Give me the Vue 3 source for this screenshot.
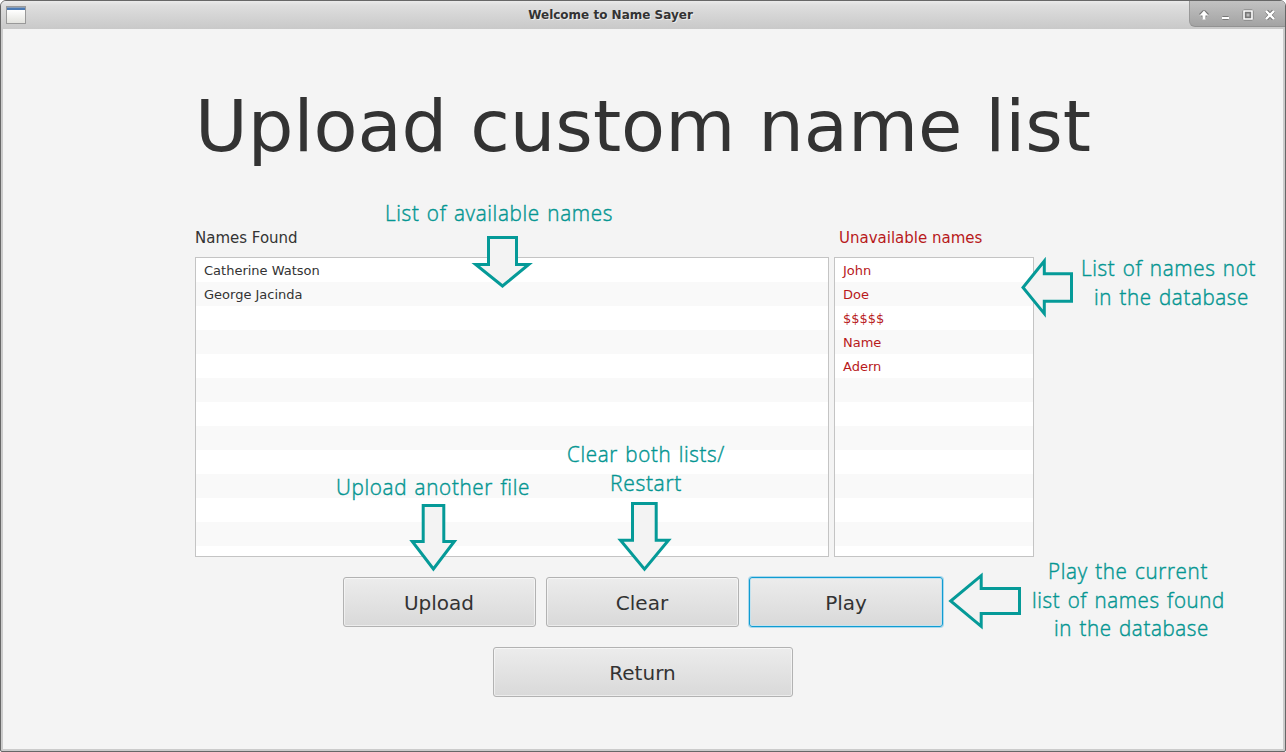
<script setup>
const found = ['Catherine Watson', 'George Jacinda']
const unavailable = ['John', 'Doe', '$$$$$', 'Name', 'Adern']

const arrows = [
  '488.5,237.5 516.5,237.5 516.5,264.5 528.7,264.5 502.5,286 475.7,264.5 488.5,264.5',
  '1071.5,273.8 1071.5,301.2 1044.3,301.2 1044.3,313.6 1023,287.5 1044.3,261 1044.3,273.8',
  '423.2,505.5 443.8,505.5 443.8,541.5 454.3,541.5 433.4,569 412.3,541.5 423.2,541.5',
  '632.5,503.5 656.2,503.5 656.2,540.2 668.5,540.2 644.5,569.2 620.5,540.2 632.5,540.2',
  '1019.5,588.5 1019.5,613.5 981.2,613.5 981.2,626.3 950.7,601 981.2,575.6 981.2,588.5',
]

const notes = [
  { t: 'List of available names', x: 385, y: 221, w: 228 },
  { t: 'List of names not', x: 1081, y: 276, w: 175 },
  { t: 'in the database', x: 1094, y: 305, w: 155 },
  { t: 'Upload another file', x: 336, y: 495, w: 194 },
  { t: 'Clear both lists/', x: 567, y: 462, w: 158 },
  { t: 'Restart', x: 610, y: 491, w: 72 },
  { t: 'Play the current', x: 1048, y: 579, w: 160 },
  { t: 'list of names found', x: 1032, y: 608, w: 193 },
  { t: 'in the database', x: 1054, y: 636, w: 155 },
]
</script>

<template>
  <div class="window">
    <header class="titlebar">
      <span class="app-icon"></span>
      <span class="caption">Welcome to Name Sayer</span>
      <div class="controls">
        <svg width="96" height="26" viewBox="0 0 96 26">
          <g fill="none" stroke="#777" stroke-width="4" stroke-linejoin="round">
            <path d="M15 18v-6M11.500 14.500l3.500-3.500 3.500 3.500" />
            <path d="M33.500 17h6" />
            <path d="M55.500 10.500h7v7h-7z" />
            <path d="M77.500 10l7 8M84.500 10l-7 8" />
          </g>
          <path d="M15 9.500l4.500 5H16.500v4h-3v-4h-3z" fill="#fff" />
          <path d="M33 16h7v2h-7z" fill="#fff" />
          <path d="M55 10h8v8h-8z" fill="none" stroke="#fff" stroke-width="1.600" />
          <path d="M57 12h4v4h-4z" fill="#bbb" stroke="#777" />
          <path d="M77 10l8 8M85 10l-8 8" stroke="#fff" stroke-width="2.400" />
        </svg>
      </div>
    </header>

    <main class="content">
      <h1>Upload custom name list</h1>
      <div class="lists">
        <section class="found">
          <h2>Names Found</h2>
          <ul><li v-for="n in found" :key="n">{{ n }}</li></ul>
        </section>
        <section class="missing">
          <h2>Unavailable names</h2>
          <ul><li v-for="n in unavailable" :key="n">{{ n }}</li></ul>
        </section>
      </div>
      <div class="actions">
        <button>Upload</button>
        <button>Clear</button>
        <button class="focused">Play</button>
      </div>
      <button class="return">Return</button>
    </main>

    <svg class="annotations" width="1286" height="752" viewBox="0 0 1286 752">
      <polygon v-for="a in arrows" :key="a" :points="a" />
      <text v-for="n in notes" :key="n.t + n.y" :x="n.x" :y="n.y" :textLength="n.w" lengthAdjust="spacingAndGlyphs">{{ n.t }}</text>
    </svg>
  </div>
</template>

<style>
body { background: #fff; overflow: hidden; }
</style>

<style scoped>
* { box-sizing: border-box; }
.window {
  position: relative;
  width: 1286px;
  height: 752px;
  display: flex;
  flex-direction: column;
  border: 1px solid #676767;
  border-radius: 6px 6px 2px 2px;
  background: #cbcbcb;
  padding: 0 2px 2px;
  overflow: hidden;
  font-family: "DejaVu Sans", sans-serif;
  color: #333;
}
.titlebar {
  flex: none;
  height: 28px;
  margin: 0 -2px;
  display: grid;
  grid-template-columns: 96px 1fr 96px;
  background: linear-gradient(#eaeaea, #dedede 15%, #c9c9c9);
}
.app-icon {
  width: 20px;
  height: 18px;
  margin: 5px 0 0 5px;
  border: 1px solid #999;
  background: linear-gradient(#8a9fb8 0 1px, #4a7ab5 1px 3px, #fff 3px, #e3e3de);
}
.caption {
  text-align: center;
  font-size: 12px;
  font-weight: bold;
  line-height: 28px;
  padding-right: 65px;
  text-shadow: 1px 1px 0 rgba(255, 255, 255, 0.6);
}
.controls {
  height: 26px;
  background: linear-gradient(#c2c2c2, #a3a3a3);
  border-left: 1px solid #999;
  border-bottom: 1px solid #929292;
  border-bottom-left-radius: 6px;
}
.controls svg { display: block; margin-left: -1px; }
.content {
  flex: 1;
  background: #f4f4f4;
  display: flex;
  flex-direction: column;
  align-items: center;
}
h1 {
  margin: 55px 0 0;
  font-size: 72px;
  font-weight: normal;
  line-height: 84px;
  white-space: nowrap;
}
.lists {
  display: flex;
  gap: 5px;
  margin: 59px 0 0 192px;
  width: 839px;
  align-self: flex-start;
}
.found { width: 634px; }
.missing { width: 200px; color: #b8191b; }
h2 {
  margin: 0;
  height: 30px;
  font-size: 15px;
  font-weight: normal;
  line-height: 22px;
}
.missing h2 { padding-left: 5px; }
ul {
  list-style: none;
  margin: 0;
  padding: 0;
  height: 300px;
  border: 1px solid #c4c4c4;
  background: repeating-linear-gradient(#fff 0 24px, #f9f9f9 24px 48px);
}
li {
  height: 24px;
  line-height: 25px;
  font-size: 13px;
  padding-left: 8px;
}
.actions { display: flex; gap: 10px; margin-top: 20px; }
button {
  width: 193px;
  height: 50px;
  padding: 2px 1px 0 0;
  border: 1px solid #b2b2b2;
  border-radius: 3px;
  background: linear-gradient(#ececec, #d9d9d9);
  box-shadow: inset 0 0 0 1px rgba(255, 255, 255, 0.5);
  font: 20px "DejaVu Sans", sans-serif;
  color: #333;
}
.focused {
  width: 194px;
  padding-right: 0;
  border-color: #109cd2;
  box-shadow: 0 0 0 1px #a9d8ec, inset 0 0 0 1px #c5e2ee;
}
.return { width: 300px; margin-top: 20px; }
.annotations {
  position: absolute;
  left: -1px;
  top: -1px;
  pointer-events: none;
}
polygon {
  fill: #f3f3f3;
  stroke: #059a98;
  stroke-width: 3;
  stroke-miterlimit: 10;
}
text {
  font-family: "Open Sans", "Noto Sans", sans-serif;
  font-size: 22.500px;
  font-weight: 300;
  letter-spacing: 0.700px;
  word-spacing: 1.500px;
  fill: #059692;
  stroke: #059692;
  stroke-width: 0.450;
}
</style>
